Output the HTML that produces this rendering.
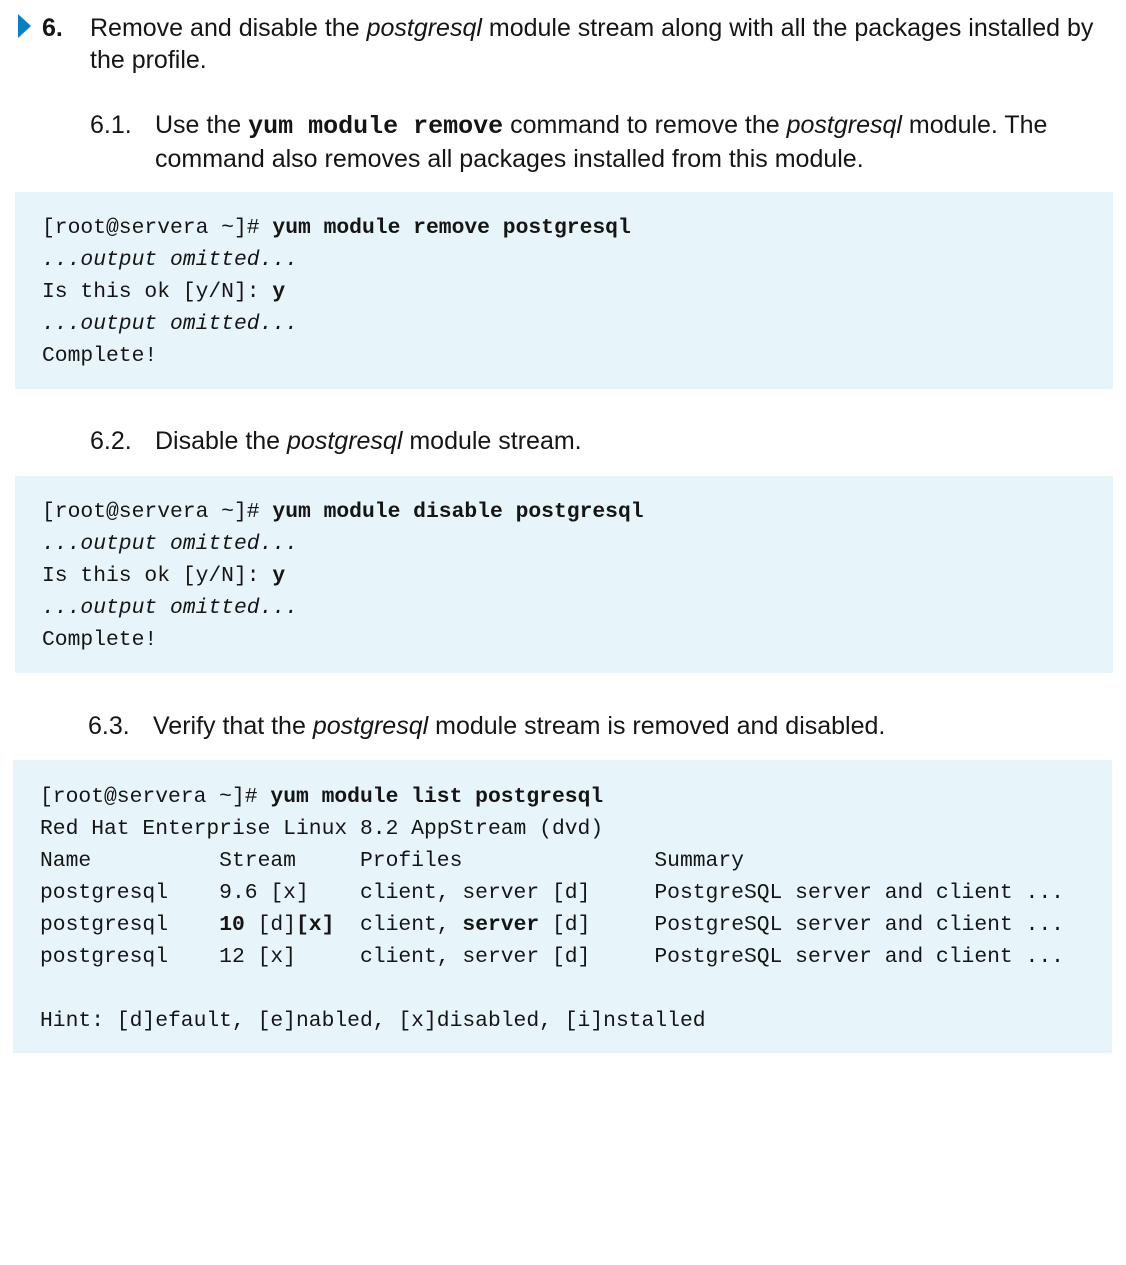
<!DOCTYPE html>
<html><head><meta charset="utf-8"><style>
body{margin:0;background:#fff;width:1126px;height:1265px;position:relative;font-family:"Liberation Sans",sans-serif;color:#151515;overflow:hidden}
.t{position:absolute;font-size:25px;line-height:32px;white-space:nowrap;letter-spacing:0}
.tri{position:absolute;left:18px;top:14px;width:0;height:0;border-top:12px solid transparent;border-bottom:12px solid transparent;border-left:13px solid #0a7ec2}
.code{position:absolute;background:#e7f4f9;}
pre{margin:0;position:absolute;font-family:"Liberation Mono",monospace;font-size:21.33px;line-height:32px;color:#151515}
b{font-weight:bold}
.m{font-family:"Liberation Mono",monospace;font-weight:bold;font-size:25px}
</style></head><body>
<div class="tri"></div>
<div class="t" style="left:42px;top:12px;font-weight:bold">6.</div>
<div class="t" style="left:90px;top:12px">Remove and disable the <i>postgresql</i> module stream along with all the packages installed by<br>the profile.</div>
<div class="t" style="left:90px;top:109px">6.1.</div>
<div class="t" style="left:155px;top:109px">Use the <span class="m">yum module remove</span> command to remove the <i>postgresql</i> module. The<br>command also removes all packages installed from this module.</div>
<div class="code" style="left:15px;top:192px;width:1098px;height:197px"></div>
<pre style="left:42px;top:212px">[root@servera ~]# <b>yum module remove postgresql</b>
<i>...output omitted...</i>
Is this ok [y/N]: <b>y</b>
<i>...output omitted...</i>
Complete!</pre>
<div class="t" style="left:90px;top:425px">6.2.</div>
<div class="t" style="left:155px;top:425px">Disable the <i>postgresql</i> module stream.</div>
<div class="code" style="left:15px;top:476px;width:1098px;height:197px"></div>
<pre style="left:42px;top:496px">[root@servera ~]# <b>yum module disable postgresql</b>
<i>...output omitted...</i>
Is this ok [y/N]: <b>y</b>
<i>...output omitted...</i>
Complete!</pre>
<div class="t" style="left:88px;top:710px">6.3.</div>
<div class="t" style="left:153px;top:710px">Verify that the <i>postgresql</i> module stream is removed and disabled.</div>
<div class="code" style="left:13px;top:760px;width:1099px;height:293px"></div>
<pre style="left:40px;top:781px">[root@servera ~]# <b>yum module list postgresql</b>
Red Hat Enterprise Linux 8.2 AppStream (dvd)
Name          Stream     Profiles               Summary
postgresql    9.6 [x]    client, server [d]     PostgreSQL server and client ...
postgresql    <b>10</b> [d]<b>[x]</b>  client, <b>server</b> [d]     PostgreSQL server and client ...
postgresql    12 [x]     client, server [d]     PostgreSQL server and client ...

Hint: [d]efault, [e]nabled, [x]disabled, [i]nstalled</pre>
</body></html>
